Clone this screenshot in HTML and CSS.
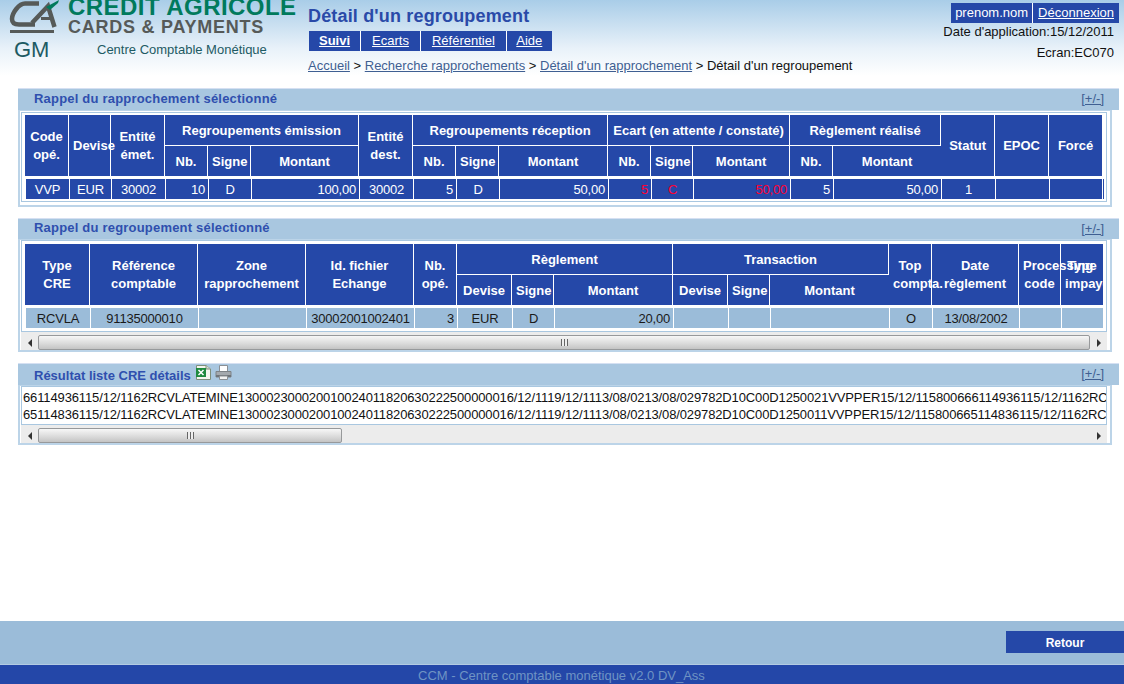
FILE: index.html
```html
<!DOCTYPE html>
<html lang="fr">
<head>
    <meta charset="UTF-8">
    <title>Détail d'un regroupement</title>
    <link rel="stylesheet" href="styles.css">
</head>
<body>
    <header class="top">
        <div class="brand">
            <div class="brand-main">
                <svg class="ca-logo" width="50" height="34" viewBox="0 0 50 34">
                    <path d="M30 3.500H16C10 3.500 3 13 3 19C3 23 6 24.500 10 24.500H26" fill="none" stroke="#565a58" stroke-width="4.500"/>
                    <path d="M23 23L39 6L45.500 27" fill="none" stroke="#565a58" stroke-width="4.500"/>
                    <path d="M32 18.500H43" stroke="#565a58" stroke-width="3"/>
                    <path d="M37 7L50 0L49 3L41 10Z" fill="#007a5c"/>
                    <rect x="1" y="30" width="44" height="3" fill="#565a58"/>
                </svg>
                <div class="brand-names">
                    <div class="brand-name">CRÉDIT AGRICOLE</div>
                    <div class="brand-sub">CARDS &amp; PAYMENTS</div>
                </div>
            </div>
            <div class="brand-line">
                <span class="brand-gm">GM</span>
                <span class="brand-app">Centre Comptable Monétique</span>
            </div>
        </div>
        <div class="top-center">
            <h1>Détail d'un regroupement</h1>
            <nav class="menu">
                <a href="#" class="menu-on">Suivi</a>
                <a href="#">Ecarts</a>
                <a href="#">Référentiel</a>
                <a href="#">Aide</a>
            </nav>
            <div class="crumbs">
                <a href="#">Accueil</a> &gt; <a href="#">Recherche rapprochements</a> &gt; <a href="#">Détail d'un rapprochement</a> &gt; Détail d'un regroupement
            </div>
        </div>
        <div class="top-right">
            <div class="user">
                <span>prenom.nom</span>
                <a href="#">Déconnexion</a>
            </div>
            <div class="info info-date">Date d'application:15/12/2011</div>
            <div class="info">Ecran:EC070</div>
        </div>
    </header>

    <main class="content">
        <section class="panel">
            <div class="panel-title">
                <h2>Rappel du rapprochement sélectionné</h2>
                <a href="#" class="toggle">[+/-]</a>
            </div>
            <div class="panel-box">
                <div class="panel-inner inner-first">
                    <table class="grid grid-first">
                        <colgroup>
                            <col width="44"><col width="42"><col width="54"><col width="43"><col width="43"><col width="108"><col width="54"><col width="43"><col width="43"><col width="109"><col width="43"><col width="42"><col width="97"><col width="43"><col width="108"><col width="54"><col width="54"><col width="53">
                        </colgroup>
                        <tr class="head-top">
                            <th rowspan="2">Code<br>opé.</th>
                            <th rowspan="2">Devise</th>
                            <th rowspan="2">Entité<br>émet.</th>
                            <th colspan="3">Regroupements émission</th>
                            <th rowspan="2">Entité<br>dest.</th>
                            <th colspan="3">Regroupements réception</th>
                            <th colspan="3">Ecart (en attente / constaté)</th>
                            <th colspan="2">Règlement réalisé</th>
                            <th rowspan="2">Statut</th>
                            <th rowspan="2">EPOC</th>
                            <th rowspan="2">Forcé</th>
                        </tr>
                        <tr class="head-sub">
                            <th>Nb.</th><th>Signe</th><th>Montant</th>
                            <th>Nb.</th><th>Signe</th><th>Montant</th>
                            <th>Nb.</th><th>Signe</th><th>Montant</th>
                            <th>Nb.</th><th>Montant</th>
                        </tr>
                    </table>
                    <table class="grid rows rows-dark">
                        <colgroup>
                            <col width="44"><col width="42"><col width="54"><col width="43"><col width="43"><col width="108"><col width="54"><col width="43"><col width="43"><col width="109"><col width="43"><col width="42"><col width="97"><col width="43"><col width="108"><col width="54"><col width="54"><col width="53"><col width="2">
                        </colgroup>
                        <tr>
                            <td>VVP</td><td>EUR</td><td>30002</td>
                            <td class="num">10</td><td>D</td><td class="num">100,00</td>
                            <td>30002</td>
                            <td class="num">5</td><td>D</td><td class="num">50,00</td>
                            <td class="num alert">5</td><td class="alert">C</td><td class="num alert">50,00</td>
                            <td class="num">5</td><td class="num">50,00</td>
                            <td>1</td><td></td><td></td><td></td>
                        </tr>
                    </table>
                </div>
            </div>
        </section>

        <section class="panel">
            <div class="panel-title title-short">
                <h2>Rappel du regroupement sélectionné</h2>
                <a href="#" class="toggle">[+/-]</a>
            </div>
            <div class="panel-box">
                <div class="panel-inner inner-second">
                    <div class="clip">
                        <table class="grid grid-second">
                            <colgroup>
                                <col width="65"><col width="108"><col width="108"><col width="108"><col width="43"><col width="55"><col width="42"><col width="119"><col width="55"><col width="42"><col width="119"><col width="43"><col width="87"><col width="42"><col width="42">
                            </colgroup>
                            <tr class="head-top">
                                <th rowspan="2">Type<br>CRE</th>
                                <th rowspan="2">Référence<br>comptable</th>
                                <th rowspan="2">Zone<br>rapprochement</th>
                                <th rowspan="2">Id. fichier<br>Echange</th>
                                <th rowspan="2">Nb.<br>opé.</th>
                                <th colspan="3">Règlement</th>
                                <th colspan="3">Transaction</th>
                                <th rowspan="2">Top<br>compta.</th>
                                <th rowspan="2">Date<br>règlement</th>
                                <th rowspan="2">Processing<br>code</th>
                                <th rowspan="2">Type<br>impayé</th>
                            </tr>
                            <tr class="head-sub">
                                <th>Devise</th><th>Signe</th><th>Montant</th>
                                <th>Devise</th><th>Signe</th><th>Montant</th>
                            </tr>
                        </table>
                        <table class="grid grid-second rows rows-light">
                            <colgroup>
                                <col width="65"><col width="108"><col width="108"><col width="108"><col width="43"><col width="55"><col width="42"><col width="119"><col width="55"><col width="42"><col width="119"><col width="43"><col width="87"><col width="42"><col width="42">
                            </colgroup>
                            <tr>
                                <td>RCVLA</td><td>91135000010</td><td></td><td>30002001002401</td>
                                <td class="num">3</td><td>EUR</td><td>D</td><td class="num">20,00</td>
                                <td></td><td></td><td></td>
                                <td>O</td><td>13/08/2002</td><td></td><td></td>
                            </tr>
                        </table>
                    </div>
                </div>
                <div class="scrollbar">
                    <span class="arrow arrow-left"></span>
                    <div class="track"><div class="thumb thumb-wide"><span class="grip"></span></div></div>
                    <span class="arrow arrow-right"></span>
                </div>
            </div>
        </section>

        <section class="panel">
            <div class="panel-title title-icons">
                <h2>Résultat liste CRE détails</h2>
                <svg class="icon-xls" width="16" height="15" viewBox="0 0 16 15">
                    <path d="M1.500 .5H11L15.500 4V14.500H1.500Z" fill="#f4f6ee" stroke="#7f8f7c"/>
                    <path d="M11 .5V4H15.500" fill="#d5dccf" stroke="#7f8f7c"/>
                    <rect x="1" y="3" width="10" height="9" fill="#1f8a3e"/>
                    <path d="M3.500 5L8.500 10M8.500 5L3.500 10" stroke="#fff" stroke-width="1.500"/>
                </svg>
                <svg class="icon-print" width="17" height="15" viewBox="0 0 17 15">
                    <path d="M4.500 6V.5H12.500V6" fill="#fff" stroke="#8a8f94"/>
                    <path d="M1 6.500H16V12H1Z" fill="#a4a9ae" stroke="#7d8287"/>
                    <rect x="1" y="10" width="15" height="2" fill="#6f7479"/>
                    <path d="M4.500 11V14.500H12.500V11Z" fill="#f2f2f2" stroke="#8a8f94"/>
                </svg>
                <a href="#" class="toggle">[+/-]</a>
            </div>
            <div class="panel-box">
                <div class="panel-inner inner-third">
                    <div class="raw">66114936115/12/1162RCVLATEMINE130002300020010024011820630222500000016/12/1119/12/1113/08/0213/08/029782D10C00D1250021VVPPER15/12/115800666114936115/12/1162RCVLATEMINE</div>
                    <div class="raw">65114836115/12/1162RCVLATEMINE130002300020010024011820630222500000016/12/1119/12/1113/08/0213/08/029782D10C00D1250011VVPPER15/12/115800665114836115/12/1162RCVLATEMINE</div>
                </div>
                <div class="scrollbar">
                    <span class="arrow arrow-left"></span>
                    <div class="track"><div class="thumb thumb-short"><span class="grip"></span></div></div>
                    <span class="arrow arrow-right"></span>
                </div>
            </div>
        </section>
    </main>

    <div class="actions">
        <a href="#" class="back">Retour</a>
    </div>
    <footer class="foot">CCM - Centre comptable monétique v2.0 DV_Ass</footer>
</body>
</html>
```

FILE: styles.css
```css
html, body {
    height: 100%;
}
body {
    font-family: "Liberation Sans", Arial, sans-serif;
    font-size: 13px;
    color: #111;
    background-color: #fff;
    margin: 0;
    display: flex;
    flex-direction: column;
    overflow: hidden;
}

/* header */
.top {
    height: 88px;
    flex: none;
    display: flex;
    overflow: hidden;
    background: linear-gradient(#a9cde8, #e8f1f9 48px, #fff 76px);
}
.brand {
    width: 308px;
    flex: none;
}
.brand-main {
    display: flex;
    height: 35px;
    padding-left: 9px;
}
.ca-logo {
    flex: none;
}
.brand-names {
    margin-left: 9px;
    font-weight: bold;
    white-space: nowrap;
}
.brand-name {
    color: #007a5c;
    font-size: 24px;
    line-height: 13px;
    letter-spacing: 0.45px;
}
.brand-sub {
    color: #565a58;
    font-size: 18px;
    line-height: 16px;
    letter-spacing: 0.75px;
    margin-top: 6px;
}
.brand-line {
    display: flex;
    align-items: center;
    height: 24px;
    margin-top: 3px;
    padding-left: 14px;
    color: #1d5a63;
}
.brand-gm {
    font-size: 22px;
    width: 83px;
}
.brand-app {
    font-size: 13px;
    margin-top: -1px;
}
.top-center {
    flex: 1;
}
h1 {
    margin: 5px 0 0 0;
    color: #2a4aa8;
    font-size: 18px;
    line-height: 22px;
    letter-spacing: 0.17px;
}
.menu {
    display: flex;
    margin: 4px 0 0 1px;
    height: 20px;
    background-color: #fff;
    width: max-content;
}
.menu a {
    background-color: #2548a8;
    color: #fff;
    line-height: 20px;
    padding: 0 11px;
    margin-right: 1px;
}
.menu a:last-child {
    margin-right: 0;
    padding: 0 9.5px;
}
.menu .menu-on {
    font-weight: bold;
    padding: 0 10px;
}
.crumbs {
    margin-top: 7px;
    line-height: 16px;
    white-space: nowrap;
}
.crumbs a {
    color: #3f5f92;
}
.top-right {
    width: 173px;
    flex: none;
    margin-right: 5px;
    display: flex;
    flex-direction: column;
    align-items: flex-end;
    white-space: nowrap;
}
.user {
    display: flex;
    margin-top: 3px;
    height: 20px;
    line-height: 20px;
    color: #fff;
    background-color: #2548a8;
}
.user span {
    padding: 0 4px;
    border-right: 1px solid #fff;
}
.user a {
    color: #fff;
    padding: 0 5px;
}
.info {
    margin-right: 5px;
    line-height: 16px;
    margin-top: 5px;
}
.info-date {
    margin-top: 1px;
}

/* panels */
.content {
    flex: 1;
}
.panel {
    margin: 0 5px 11px 18px;
}
.panel-title {
    height: 21px;
    background-color: #a9c7e0;
    border-top: 1px solid #d5e0f2;
    display: flex;
    align-items: center;
    padding-left: 16px;
}
.title-short {
    height: 20px;
}
h2 {
    margin: 0 0 2px 0;
    font-size: 13px;
    letter-spacing: 0.2px;
    color: #2f4fae;
}
.title-short h2 {
    margin-bottom: 3px;
}
.title-icons h2 {
    margin: 1px 0 0 0;
    letter-spacing: 0;
}
.toggle {
    margin-left: auto;
    margin-right: 15px;
    margin-bottom: 2px;
    color: #3f5f92;
}
.icon-xls {
    margin: 1px 0 0 4px;
    align-self: flex-start;
}
.icon-print {
    margin: 1px 0 0 4px;
    align-self: flex-start;
}
.panel-box {
    width: 1090px;
    border: 2px solid #bcd4e8;
    border-top: 1px solid #bcd4e8;
    background-color: #fff;
}
.panel-inner {
    border: 1px solid #a9c7e0;
    margin: 1px 0 0 1px;
    overflow: hidden;
    width: 1086px;
    box-sizing: border-box;
}
.inner-first {
    padding: 2px 0 2px 3px;
    margin-bottom: 3px;
}
.inner-second {
    padding: 3px 0 3px 3px;
    margin-top: 0;
}
.inner-third {
    margin-top: 0;
    padding: 2px 0 0 1px;
    height: 39px;
}
.clip {
    width: 1080px;
    overflow: hidden;
}

/* tables */
.grid {
    border-collapse: separate;
    border-spacing: 0;
    table-layout: fixed;
}
.grid-first {
    width: 1077px;
}
.grid-second {
    width: 1078px;
}
.rows-dark {
    width: 1079px;
}
.grid th {
    background-color: #2548a8;
    color: #fff;
    font-size: 13px;
    font-weight: bold;
    line-height: 18px;
    padding: 0 4px;
    white-space: nowrap;
    border-right: 1px solid #fff;
    box-sizing: border-box;
}
.grid tr th:last-child {
    border-right: none;
}
.head-top th {
    height: 30px;
}
.head-top th[colspan] {
    padding-top: 2px;
}
.head-sub th {
    height: 31px;
    border-top: 1px solid #fff;
    padding-top: 1px;
}
.rows {
    margin: 3px 0 0 1px;
}
.rows td {
    height: 20px;
    padding: 0 3px;
    font-size: 13px;
    letter-spacing: -0.2px;
    text-align: center;
    white-space: nowrap;
    overflow: hidden;
    border-right: 1px solid #fff;
    box-sizing: border-box;
}
.rows-dark td {
    background-color: #2548a8;
    color: #fff;
}
.rows-light td {
    background-color: #9bbcd9;
    color: #1a1a1a;
}
.rows .num {
    text-align: right;
}
.rows .alert {
    color: #ff0033;
}
.raw {
    font-size: 13px;
    letter-spacing: -0.13px;
    line-height: 17px;
    white-space: nowrap;
}

/* scrollbars */
.scrollbar {
    display: flex;
    align-items: flex-end;
    height: 18px;
    margin-left: 1px;
    width: 1086px;
    background-color: #ececec;
}
.arrow {
    width: 17px;
    height: 15px;
    flex: none;
    display: flex;
    justify-content: center;
    align-items: center;
}
.arrow::before {
    content: "";
    border-top: 4px solid transparent;
    border-bottom: 4px solid transparent;
}
.arrow-left::before {
    border-right: 4px solid #333;
}
.arrow-right::before {
    border-left: 4px solid #333;
}
.track {
    flex: 1;
    display: flex;
    height: 15px;
}
.thumb {
    border: 1px solid #97999b;
    border-radius: 2px;
    background: linear-gradient(#f7f7f7, #dcdcdc 55%, #c4c4c4);
    box-sizing: border-box;
    display: flex;
    align-items: center;
    justify-content: center;
}
.thumb-wide {
    width: 1052px;
}
.thumb-short {
    width: 304px;
}
.grip {
    width: 7px;
    height: 7px;
    background: repeating-linear-gradient(90deg, #666 0, #666 1px, #eee 1px, #eee 3px);
}

/* bottom */
.actions {
    height: 43px;
    flex: none;
    display: flex;
    justify-content: flex-end;
    align-items: flex-start;
    background-color: #9bbcd9;
}
.back {
    margin-top: 10px;
    width: 118px;
    height: 22px;
    line-height: 24px;
    font-size: 12px;
    text-align: center;
    background-color: #2548a8;
    color: #fff;
    font-weight: bold;
    text-decoration: none;
}
.foot {
    height: 20px;
    flex: none;
    line-height: 21px;
    padding-left: 418px;
    background-color: #2447a8;
    border-top: 1px solid #b4cbe2;
    box-sizing: border-box;
    color: #6f94c4;
}
```
